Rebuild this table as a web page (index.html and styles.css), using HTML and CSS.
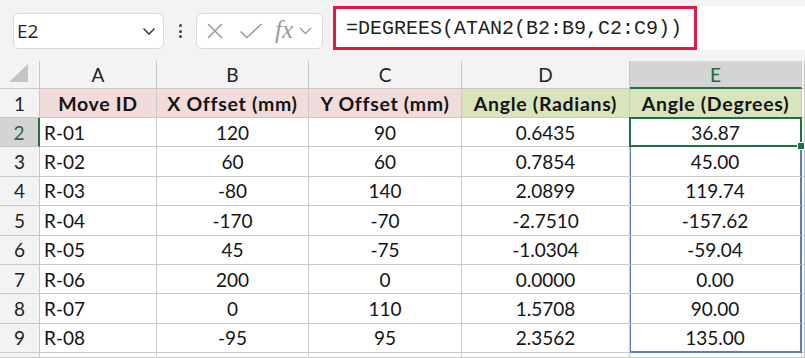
FILE: index.html
```html
<!DOCTYPE html>
<html>
<head>
<meta charset="utf-8">
<link rel="stylesheet" href="styles.css">
</head>
<body>
<div class="toolbar">
  <div class="namebox">
    <span class="nb-text">E2</span>
    <svg class="chev" width="14" height="9" viewBox="0 0 14 9"><path d="M1.5 1.5 L7 7 L12.5 1.5" fill="none" stroke="#444" stroke-width="1.6"/></svg>
  </div>
  <div class="dots"><span></span><span></span><span></span></div>
  <div class="fbtns">
    <svg width="18" height="18" viewBox="0 0 18 18"><path d="M2 2 L16 16 M16 2 L2 16" stroke="#9a9a9a" stroke-width="1.5" fill="none"/></svg>
    <svg width="24" height="16" viewBox="0 0 24 16"><path d="M1.5 8.5 L8 14.5 L22.5 1" stroke="#9a9a9a" stroke-width="1.5" fill="none"/></svg>
    <span class="fx">fx</span>
    <svg width="13" height="8" viewBox="0 0 13 8"><path d="M1 1 L6.5 6.5 L12 1" stroke="#9a9a9a" stroke-width="1.4" fill="none"/></svg>
  </div>
  <div class="fbar">
    <div class="fbox">=DEGREES(ATAN2(B2:B9,C2:C9))</div>
  </div>
</div>
<div class="sheet">
  <div class="ch corner"><svg width="22" height="20" viewBox="0 0 22 20"><path d="M21 1 L21 19 L2 19 Z" fill="#c4c4c4"/></svg></div>
  <div class="ch">A</div><div class="ch">B</div><div class="ch">C</div><div class="ch">D</div><div class="ch ch-sel">E</div><div class="ch"></div>

  <div class="rh">1</div>
  <div class="c hd pink">Move ID</div><div class="c hd pink">X Offset (mm)</div><div class="c hd pink">Y Offset (mm)</div><div class="c hd green">Angle (Radians)</div><div class="c hd green">Angle (Degrees)</div><div class="c"></div>

  <div class="rh rh-sel">2</div>
  <div class="c l">R-01</div><div class="c">120</div><div class="c">90</div><div class="c">0.6435</div><div class="c active">36.87<span class="handle"></span></div><div class="c"></div>

  <div class="rh">3</div>
  <div class="c l">R-02</div><div class="c">60</div><div class="c">60</div><div class="c">0.7854</div><div class="c rng">45.00</div><div class="c"></div>

  <div class="rh">4</div>
  <div class="c l">R-03</div><div class="c">-80</div><div class="c">140</div><div class="c">2.0899</div><div class="c rng">119.74</div><div class="c"></div>

  <div class="rh">5</div>
  <div class="c l">R-04</div><div class="c">-170</div><div class="c">-70</div><div class="c">-2.7510</div><div class="c rng">-157.62</div><div class="c"></div>

  <div class="rh">6</div>
  <div class="c l">R-05</div><div class="c">45</div><div class="c">-75</div><div class="c">-1.0304</div><div class="c rng">-59.04</div><div class="c"></div>

  <div class="rh">7</div>
  <div class="c l">R-06</div><div class="c">200</div><div class="c">0</div><div class="c">0.0000</div><div class="c rng">0.00</div><div class="c"></div>

  <div class="rh">8</div>
  <div class="c l">R-07</div><div class="c">0</div><div class="c">110</div><div class="c">1.5708</div><div class="c rng">90.00</div><div class="c"></div>

  <div class="rh">9</div>
  <div class="c l">R-08</div><div class="c">-95</div><div class="c">95</div><div class="c">2.3562</div><div class="c rng rng-last">135.00</div><div class="c"></div>

  <div class="rh"></div>
  <div class="c"></div><div class="c"></div><div class="c"></div><div class="c"></div><div class="c"></div><div class="c"></div>
</div>
</body>
</html>
```

FILE: styles.css
```css
html, body {
  margin: 0;
  padding: 0;
  background: #ffffff;
  overflow: hidden;
}
body {
  width: 805px;
  height: 358px;
  font-family: Lato, "Liberation Sans", sans-serif;
  color: #141414;
}
.toolbar {
  display: flex;
  align-items: flex-start;
  height: 61px;
  box-sizing: border-box;
  padding: 6px 0 0 13px;
  background: #f3f3f3;
}
.namebox {
  width: 151px;
  height: 36px;
  margin-top: 7px;
  box-sizing: border-box;
  border: 1px solid #d9d9d9;
  border-radius: 6px;
  background: #fff;
  display: flex;
  align-items: center;
  justify-content: space-between;
  padding: 0 7px 0 3px;
}
.nb-text {
  font-family: "Open Sans", "Noto Sans", sans-serif;
  font-size: 19px;
  color: #222;
}
.dots {
  width: 32px;
  height: 36px;
  margin-top: 7px;
  display: flex;
  flex-direction: column;
  align-items: center;
  justify-content: center;
  gap: 2.5px;
}
.dots span {
  width: 3px;
  height: 3px;
  border-radius: 50%;
  background: #444;
}
.fbtns {
  width: 127px;
  height: 36px;
  margin-top: 7px;
  box-sizing: border-box;
  border: 1px solid #d9d9d9;
  border-radius: 6px;
  background: #fff;
  display: flex;
  align-items: center;
  padding: 0 4px 0 9px;
}
.fbtns svg:nth-child(1) { margin-right: 15px; }
.fbtns svg:nth-child(2) { margin-right: 12px; }
.fx {
  font-family: "Liberation Serif", "DejaVu Serif", serif;
  font-style: italic;
  font-size: 25px;
  color: #9a9a9a;
  margin-right: 6px;
  line-height: 1;
  margin-top: -4px;
}
.fbar {
  flex: 1;
  margin-left: 10px;
  height: 44px;
  background: #ffffff;
}
.fbox {
  width: 364px;
  height: 44px;
  box-sizing: border-box;
  border: 3px solid #e11b48;
  display: flex;
  align-items: center;
  padding-left: 10px;
  font-family: "Liberation Mono", monospace;
  font-size: 20px;
  color: #222;
}
.sheet {
  display: grid;
  grid-template-columns: 40px 117px 152px 153px 168px 172px 1fr;
  grid-template-rows: 28px 29px repeat(8, 29.4px) 1fr;
  height: 297px;
}
.sheet > div {
  box-sizing: border-box;
  border-right: 1px solid #c9c9c9;
  border-bottom: 1px solid #c9c9c9;
  display: flex;
  align-items: center;
  justify-content: center;
  font-size: 19px;
  white-space: nowrap;
  position: relative;
}
.ch {
  background: #f3f3f3;
  color: #222;
}
.corner {
  align-items: flex-end;
  justify-content: flex-end;
  padding: 0 3px 3px 0;
}
.ch-sel {
  background: #d4d4d4;
  color: #1d6b3e;
  border-bottom: 2px solid #1f7145 !important;
}
.rh {
  background: #f3f3f3;
  color: #222;
}
.rh-sel {
  background: #d4d4d4;
  color: #1d6b3e;
  border-right: 2px solid #1f7145 !important;
}
.c.l {
  justify-content: flex-start;
  padding-left: 4px;
}
.sheet > .hd {
  font-weight: 700;
  font-size: 19.5px;
  letter-spacing: 0.7px;
}
.pink { background: #f2dcdb; }
.green { background: #d8e4bc; }
.active {
  border: 2px solid #1f7145 !important;
  margin-left: -1px;
  margin-top: -1px;
  z-index: 2;
}
.handle {
  position: absolute;
  right: -5px;
  bottom: -5px;
  width: 6px;
  height: 6px;
  background: #1f7145;
  border: 1px solid #fff;
}
.rng {
  border-right: 2px solid #5a7dc1 !important;
  box-shadow: inset 1px 0 0 #5a7dc1;
}
.rng-last {
  border-bottom: 2px solid #5a7dc1 !important;
}
```
